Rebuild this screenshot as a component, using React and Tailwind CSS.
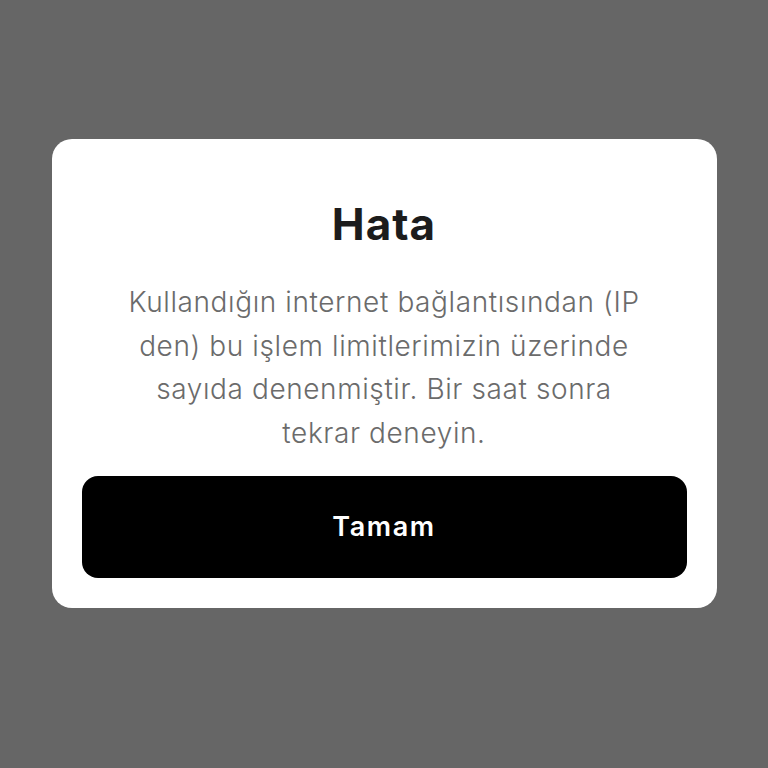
export default function App() {
  return (
    <div
      className="w-[768px] h-[768px] bg-[#666666] flex items-start justify-center pt-[139px]"
      style={{ fontFamily: 'Inter, "Noto Sans", sans-serif' }}
    >
      <div className="w-[665px] bg-white rounded-[20px] px-[30px] pt-[59px] pb-[30px] flex flex-col items-center">
        <h1 className="text-[44px] leading-[52px] font-bold text-[#1c1c1c] tracking-[1px]">Hata</h1>
        <p className="mt-[31px] text-[28px] leading-[43.5px] font-light text-[#6b6b6b] text-center tracking-[0.6px]">
          Kullandığın internet bağlantısından (IP
          <br />
          den) bu işlem limitlerimizin üzerinde
          <br />
          sayıda denenmiştir. Bir saat sonra
          <br />
          tekrar deneyin.
        </p>
        <button className="mt-[21px] w-full h-[102px] bg-black rounded-[16px] text-white text-[27px] font-semibold tracking-[1.6px]">
          Tamam
        </button>
      </div>
    </div>
  );
}
